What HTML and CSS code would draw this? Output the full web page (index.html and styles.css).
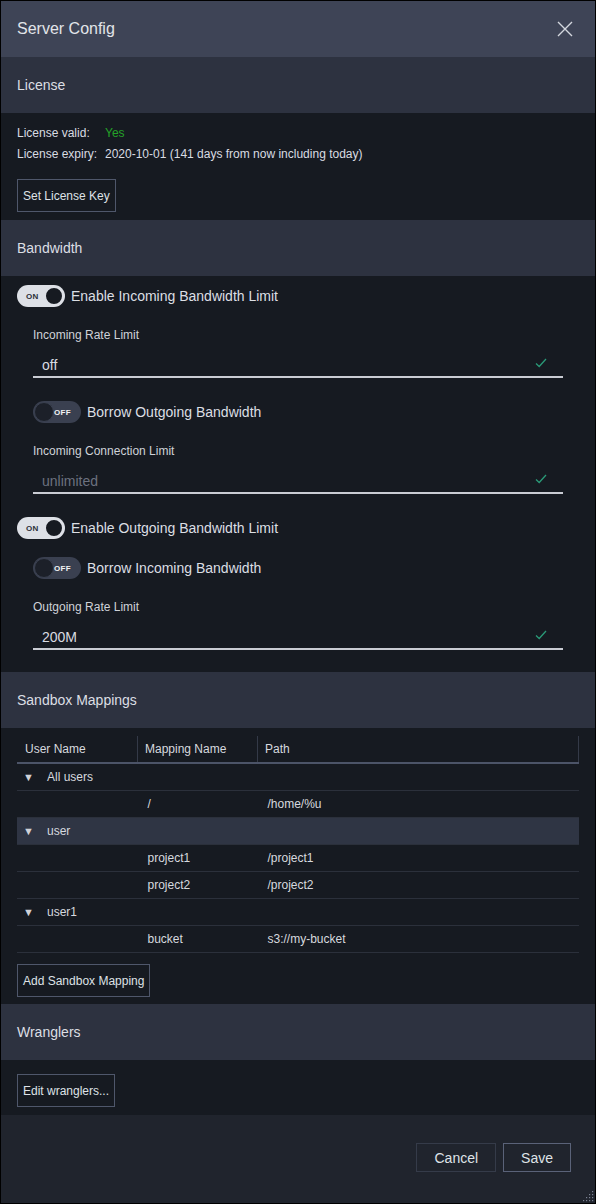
FILE: index.html
```html
<!DOCTYPE html>
<html lang="en">
<head>
    <title>Server Config</title>
    <link rel="stylesheet" href="styles.css">
</head>
<body>
    <div class="dialog">
        <div class="titlebar">
            <span class="title">Server Config</span>
            <button class="close" aria-label="Close">
                <svg width="16" height="16" viewBox="0 0 16 16"><path d="M1 1L15 15M15 1L1 15" stroke="#d4d7de" stroke-width="1.4" fill="none"/></svg>
            </button>
        </div>

        <div class="section-head">License</div>
        <div class="section-body license">
            <div class="info-row"><span class="info-key">License valid:</span><span class="ok">Yes</span></div>
            <div class="info-row"><span class="info-key">License expiry:</span><span>2020-10-01 (141 days from now including today)</span></div>
            <button class="btn">Set License Key</button>
        </div>

        <div class="section-head">Bandwidth</div>
        <div class="section-body bandwidth">
            <div class="toggle-row">
                <span class="toggle on"><span class="toggle-text">ON</span><span class="knob"></span></span>
                <span class="toggle-label">Enable Incoming Bandwidth Limit</span>
            </div>
            <div class="nested">
                <div class="field">
                    <label class="field-label">Incoming Rate Limit</label>
                    <div class="input">
                        <span class="value">off</span>
                        <svg class="check" width="12" height="10" viewBox="0 0 12 10"><path d="M1 5.5L4.2 8.5L11 1" stroke="#2a9a78" stroke-width="1.3" fill="none"/></svg>
                    </div>
                </div>
                <div class="toggle-row sub">
                    <span class="toggle off"><span class="knob"></span><span class="toggle-text">OFF</span></span>
                    <span class="toggle-label">Borrow Outgoing Bandwidth</span>
                </div>
                <div class="field">
                    <label class="field-label">Incoming Connection Limit</label>
                    <div class="input">
                        <span class="value placeholder">unlimited</span>
                        <svg class="check" width="12" height="10" viewBox="0 0 12 10"><path d="M1 5.5L4.2 8.5L11 1" stroke="#2a9a78" stroke-width="1.3" fill="none"/></svg>
                    </div>
                </div>
            </div>
            <div class="toggle-row top-gap">
                <span class="toggle on"><span class="toggle-text">ON</span><span class="knob"></span></span>
                <span class="toggle-label">Enable Outgoing Bandwidth Limit</span>
            </div>
            <div class="nested">
                <div class="toggle-row sub-first">
                    <span class="toggle off"><span class="knob"></span><span class="toggle-text">OFF</span></span>
                    <span class="toggle-label">Borrow Incoming Bandwidth</span>
                </div>
                <div class="field">
                    <label class="field-label">Outgoing Rate Limit</label>
                    <div class="input">
                        <span class="value">200M</span>
                        <svg class="check" width="12" height="10" viewBox="0 0 12 10"><path d="M1 5.5L4.2 8.5L11 1" stroke="#2a9a78" stroke-width="1.3" fill="none"/></svg>
                    </div>
                </div>
            </div>
        </div>

        <div class="section-head">Sandbox Mappings</div>
        <div class="section-body sandbox">
            <table class="mappings">
                <thead>
                    <tr><th>User Name</th><th>Mapping Name</th><th>Path</th></tr>
                </thead>
                <tbody>
                    <tr class="group"><td colspan="3"><span class="caret">&#9660;</span>All users</td></tr>
                    <tr><td></td><td>/</td><td>/home/%u</td></tr>
                    <tr class="group selected"><td colspan="3"><span class="caret">&#9660;</span>user</td></tr>
                    <tr><td></td><td>project1</td><td>/project1</td></tr>
                    <tr><td></td><td>project2</td><td>/project2</td></tr>
                    <tr class="group"><td colspan="3"><span class="caret">&#9660;</span>user1</td></tr>
                    <tr><td></td><td>bucket</td><td>s3://my-bucket</td></tr>
                </tbody>
            </table>
            <button class="btn">Add Sandbox Mapping</button>
        </div>

        <div class="section-head">Wranglers</div>
        <div class="section-body wranglers">
            <button class="btn">Edit wranglers...</button>
        </div>

        <div class="footer">
            <button class="btn footer-btn cancel">Cancel</button>
            <button class="btn footer-btn save">Save</button>
            <svg class="grip" width="12" height="12" viewBox="0 0 12 12">
                <g fill="#7a8090">
                    <rect x="10" y="1" width="1.2" height="1.2"/>
                    <rect x="7" y="4" width="1.2" height="1.2"/><rect x="10" y="4" width="1.2" height="1.2"/>
                    <rect x="4" y="7" width="1.2" height="1.2"/><rect x="7" y="7" width="1.2" height="1.2"/><rect x="10" y="7" width="1.2" height="1.2"/>
                    <rect x="1" y="10" width="1.2" height="1.2"/><rect x="4" y="10" width="1.2" height="1.2"/><rect x="7" y="10" width="1.2" height="1.2"/><rect x="10" y="10" width="1.2" height="1.2"/>
                </g>
            </svg>
        </div>
    </div>
</body>
</html>
```

FILE: styles.css
```css
body {
    margin: 0;
    font-family: "Liberation Sans", Arial, sans-serif;
    color: #d9dce2;
    background: #000;
}

.dialog {
    position: relative;
    display: flex;
    flex-direction: column;
    height: 1204px;
    box-sizing: border-box;
    border: 1px solid #000;
    background: #20242d;
}

.titlebar {
    display: flex;
    align-items: center;
    justify-content: space-between;
    height: 56px;
    padding: 0 16px;
    background: #3e4456;
}

.title {
    font-size: 16px;
    color: #e2e4e9;
}

.close {
    background: none;
    border: none;
    padding: 0;
    margin-right: 6px;
    display: flex;
}

.section-head {
    height: 56px;
    line-height: 56px;
    padding: 0 16px;
    font-size: 14px;
    background: #2d3240;
    color: #dcdfe4;
}

.section-body {
    background: #161a21;
    padding: 0 16px;
}

.btn {
    font-family: inherit;
    font-size: 12px;
    color: #dfe2e7;
    background: transparent;
    border: 1px solid #4f576b;
    height: 33px;
    padding: 0 5px;
    display: block;
}

/* License */

.license {
    padding-top: 10px;
    padding-bottom: 8px;
}

.info-row {
    font-size: 12px;
    line-height: 21px;
}

.info-key {
    display: inline-block;
    width: 88px;
}

.ok {
    color: #24a228;
}

.license .btn {
    margin-top: 14px;
}

/* Bandwidth */

.bandwidth {
    padding-top: 9px;
    padding-bottom: 22px;
}

.nested {
    padding: 0 16px;
}

.toggle-row {
    display: flex;
    align-items: center;
    height: 22px;
}

.toggle-row.sub {
    margin-top: 23px;
}

.toggle-row.top-gap {
    margin-top: 23px;
}

.toggle-row.sub-first {
    margin-top: 18px;
}

.toggle {
    display: flex;
    align-items: center;
    justify-content: space-between;
    width: 48px;
    height: 22px;
    box-sizing: border-box;
    border-radius: 11px;
    padding: 0 1px;
}

.toggle.on {
    background: #dde0e6;
    padding-left: 9px;
}

.toggle.off {
    background: #3a4050;
    padding-right: 10px;
}

.toggle-text {
    font-size: 8px;
    font-weight: bold;
    letter-spacing: 0.3px;
}

.toggle.on .toggle-text {
    color: #2b2f38;
}

.toggle.off .toggle-text {
    color: #f2f3f5;
}

.knob {
    width: 20px;
    height: 20px;
    box-sizing: border-box;
    border-radius: 50%;
}

.toggle.on .knob {
    background: #161a21;
    border: 2px solid #dde0e6;
}

.toggle.off .knob {
    background: #1c2029;
    border: 1px solid #3a4050;
}

.toggle-label {
    margin-left: 6px;
    font-size: 14px;
    color: #dcdfe4;
}

.field {
    margin-top: 20px;
}

.field-label {
    display: block;
    font-size: 12px;
    line-height: 16px;
    color: #cfd2d8;
}

.input {
    position: relative;
    height: 35px;
    box-sizing: border-box;
    padding: 12px 9px 1px;
    border-bottom: 2px solid #c9ccd3;
    line-height: 20px;
    font-size: 14px;
}

.placeholder {
    color: #6c717f;
}

.check {
    position: absolute;
    right: 16px;
    top: 15px;
}

/* Sandbox mappings */

.sandbox {
    padding-top: 8px;
    padding-bottom: 7px;
}

.mappings {
    width: 100%;
    border-collapse: collapse;
    font-size: 12px;
    color: #d6d9df;
}

.mappings th {
    text-align: left;
    font-weight: normal;
    height: 26px;
    padding: 0 8px 0 7px;
    border-right: 1px solid #343a48;
    border-bottom: 2px solid #4c5468;
}

.mappings th:first-child {
    width: 104px;
    padding-left: 8px;
}

.mappings th:nth-child(2) {
    width: 104px;
}

.mappings td {
    height: 26px;
    padding: 0 10px;
    border-bottom: 1px solid #2b303b;
}

.mappings tr.group td {
    padding-left: 6px;
}

.mappings tr.selected td {
    background: #2f3544;
}

.caret {
    display: inline-block;
    width: 24px;
    font-size: 11px;
    color: #cfd2d8;
}

.sandbox .btn {
    margin-top: 11px;
}

/* Wranglers */

.wranglers {
    padding-top: 14px;
    padding-bottom: 8px;
}

/* Footer */

.footer {
    flex: 1;
    display: flex;
    justify-content: flex-end;
    align-items: flex-start;
    gap: 7px;
    padding: 28px 24px 0;
}

.footer-btn {
    height: 29px;
    font-size: 14px;
    padding: 0 17px;
}

.footer-btn.cancel {
    border-color: #353b49;
}

.footer-btn.save {
    border-color: #5a6278;
}

.grip {
    position: absolute;
    right: 1px;
    bottom: 1px;
}
```
